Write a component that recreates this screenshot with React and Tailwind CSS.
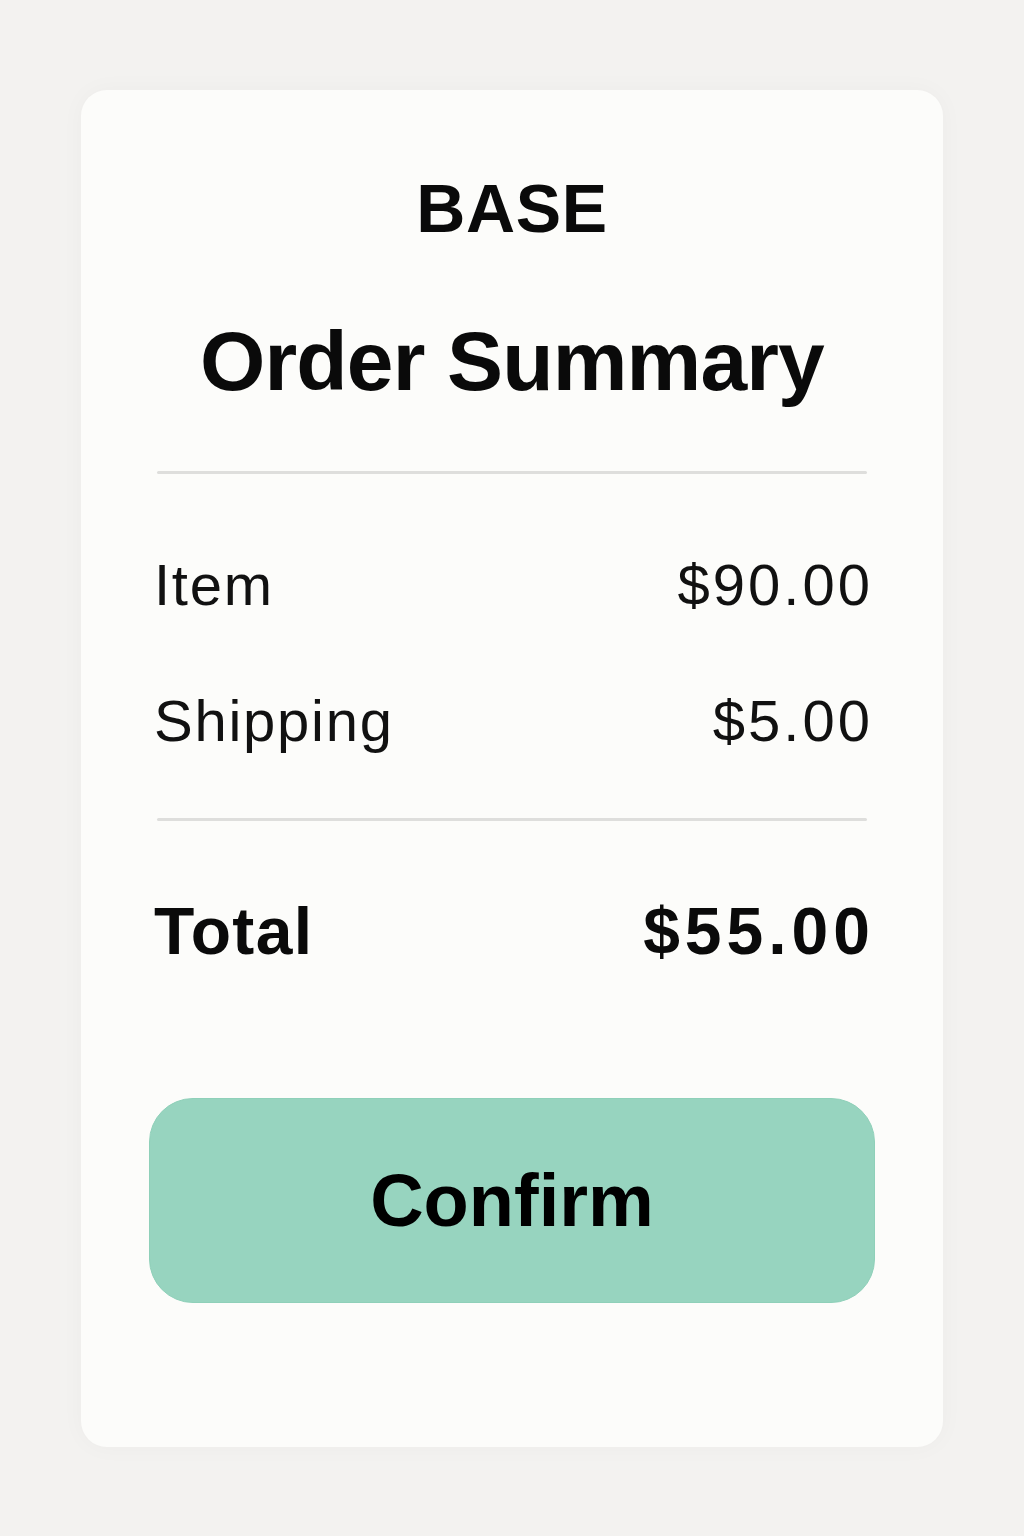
export default function App() {
  const lines = [
    { label: "Item", amount: "$90.00" },
    { label: "Shipping", amount: "$5.00" },
  ];

  return (
    <div
      className="min-h-[1536px] w-full bg-[#f3f2f0] pt-[90px] flex justify-center"
      style={{ fontFamily: '"Liberation Sans", Arial, sans-serif' }}
    >
      <div className="w-[862px] h-[1357px] bg-[#fcfcfa] rounded-[26px] shadow-[0_0_24px_rgba(0,0,0,0.03)] px-[73px] pt-[84px] flex flex-col text-[#0a0a0a]">
        {/* Brand */}
        <div className="text-center text-[68px] leading-none font-bold tracking-[0.01em]">
          BASE
        </div>

        {/* Heading */}
        <h1 className="mt-[77px] text-center text-[84px] leading-none font-bold tracking-[-0.01em]">
          Order Summary
        </h1>

        <div className="mt-[68px] mx-[3px] h-[3px] bg-[#dededc] rounded-full" />

        {/* Line items */}
        <div className="mt-[82px] flex flex-col gap-[78px]">
          {lines.map((line) => (
            <div
              key={line.label}
              className="flex justify-between items-start text-[58px] leading-none text-[#111]"
            >
              <span className="tracking-[0.03em]">{line.label}</span>
              <span className="tracking-[3px] -mr-[3px]">{line.amount}</span>
            </div>
          ))}
        </div>

        <div className="mt-[68px] mx-[3px] h-[3px] bg-[#dededc] rounded-full" />

        {/* Total */}
        <div className="mt-[77px] flex justify-between items-start text-[66px] leading-none font-bold">
          <span className="tracking-[0.02em]">Total</span>
          <span className="tracking-[5px] -mr-[5px]">$55.00</span>
        </div>

        {/* Action */}
        <button className="mt-[134px] -mx-[5px] h-[205px] rounded-[44px] bg-[#97d4bf] border border-[#8fd0b9] text-[74px] font-bold leading-none text-black flex items-center justify-center">
          Confirm
        </button>
      </div>
    </div>
  );
}
